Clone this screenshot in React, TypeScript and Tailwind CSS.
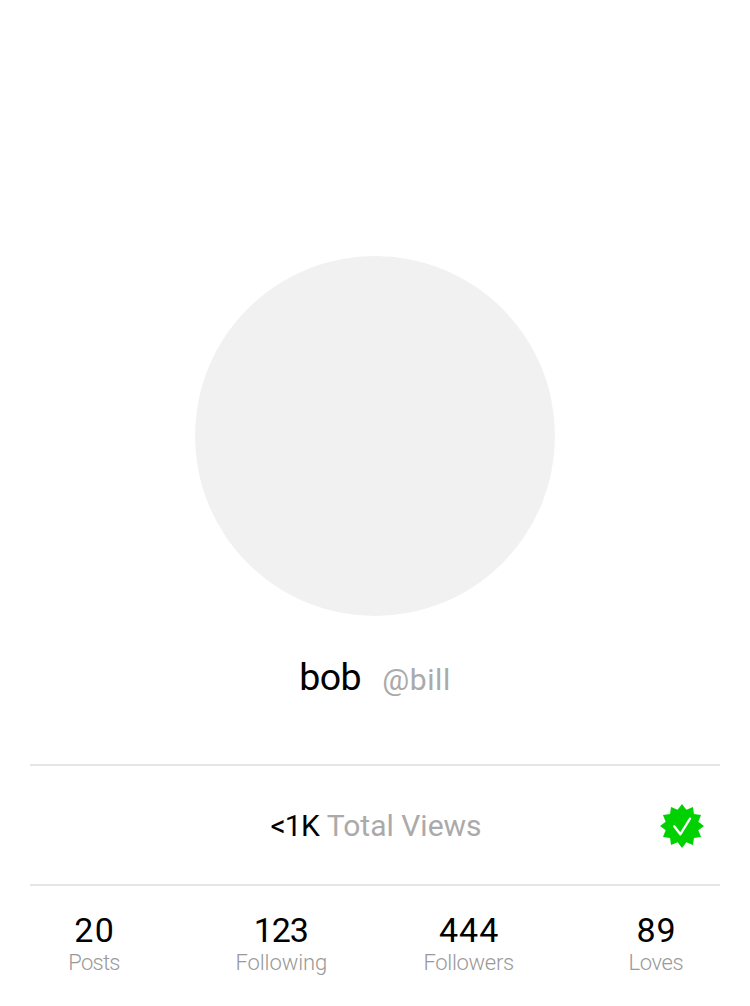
const stats = [
  { value: "20", label: "Posts", num: "mr-[-1.5px] tracking-[1.5px]", text: "tracking-[-0.7px]" },
  { value: "123", label: "Following", num: "mr-[1px] tracking-[-1px]", text: "tracking-[-0.1px]" },
  { value: "444", label: "Followers", num: "mr-[-1px] tracking-[1px]", text: "tracking-[-0.3px]" },
  { value: "89", label: "Loves", num: "mr-[-1px] tracking-[1px]", text: "tracking-[-0.4px]" },
];

function VerifiedBadge() {
  const points = Array.from({ length: 24 }, (_, i) => {
    const r = i % 2 ? 16.9 : 22;
    const a = (i * Math.PI) / 12;
    return `${(22 + r * Math.sin(a)).toFixed(2)},${(22 - r * Math.cos(a)).toFixed(2)}`;
  }).join(" ");
  return (
    <svg className="h-11 w-11" viewBox="0 0 44 44" fill="none" aria-hidden="true">
      <polygon points={points} fill="#00d100" />
      <path d="M14.2 22.3 20.3 30.3 30 14.6" stroke="#fff" strokeWidth="2.3" strokeLinecap="round" strokeLinejoin="round" />
    </svg>
  );
}

export default function App() {
  return (
    <main className="flex h-[1006px] w-[750px] flex-col bg-white px-[30px] pt-64 font-['Roboto',sans-serif] text-black">
      <div className="h-[360px] w-[360px] self-center rounded-full bg-[#f1f1f1]" />
      <div className="flex h-[148px] items-baseline justify-center gap-[21px] pt-[37px]">
        <h1 className="text-[37.5px] leading-[48px] tracking-[-0.5px]">bob</h1>
        <span className="text-[30px] leading-[46px] tracking-[0.6px] text-[#aaa]">@bill</span>
      </div>
      <section className="grid h-[122px] grid-cols-[1fr_auto_1fr] items-center border-y-2 border-[#e5e5e5] pt-[2px]">
        <span />
        <p className="pl-[2px] text-[30px] leading-9">
          <span className="mr-[1px] tracking-[-0.8px]">&lt;1K</span> <span className="text-[#aaa]">Total Views</span>
        </p>
        <span className="mr-4 justify-self-end"><VerifiedBadge /></span>
      </section>
      <section className="flex justify-between pt-[24px]">
        {stats.map((s) => (
          <div key={s.label} className="flex w-[128px] flex-col items-center">
            <strong className={`text-[34px] leading-[40px] font-normal ${s.num}`}>{s.value}</strong>
            <span className={`text-[22px] leading-[26px] font-light text-[#999] ${s.text}`}>{s.label}</span>
          </div>
        ))}
      </section>
    </main>
  );
}
